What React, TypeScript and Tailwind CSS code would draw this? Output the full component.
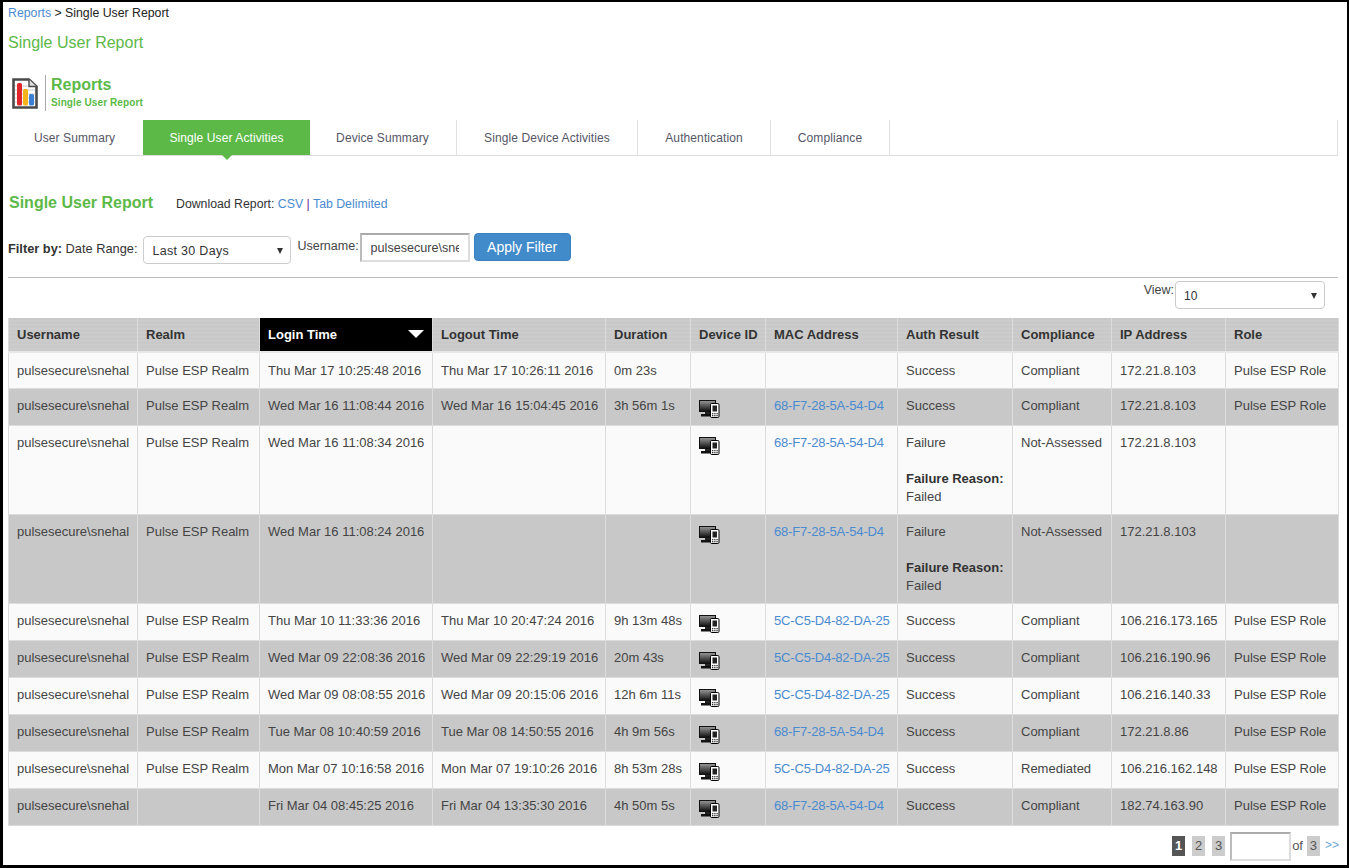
import React from "react";

function DeviceIcon() {
  return (
    <svg width="21" height="18" viewBox="0 0 21 18" className="block">
      <defs>
        <linearGradient id="scr" x1="0" y1="0" x2="0" y2="1">
          <stop offset="0" stopColor="#9a9a9a" />
          <stop offset="1" stopColor="#0c0c0c" />
        </linearGradient>
      </defs>
      <rect x="0.5" y="0.5" width="16" height="11" fill="url(#scr)" stroke="#111" />
      <rect x="6" y="12" width="5" height="2" fill="#222" />
      <rect x="2" y="14" width="13" height="2.5" fill="#111" />
      <rect x="11.5" y="3.5" width="8.5" height="14" rx="1.2" fill="#fff" stroke="#000" />
      <rect x="13.5" y="5.5" width="4.5" height="6" fill="#222" />
      <rect x="13" y="13" width="1.3" height="1.3" fill="#333" />
      <rect x="15.2" y="13" width="1.3" height="1.3" fill="#333" />
      <rect x="17.4" y="13" width="1.3" height="1.3" fill="#333" />
      <rect x="13" y="15" width="1.3" height="1.3" fill="#333" />
      <rect x="15.2" y="15" width="1.3" height="1.3" fill="#333" />
      <rect x="17.4" y="15" width="1.3" height="1.3" fill="#333" />
    </svg>
  );
}

function ReportIcon() {
  return (
    <svg width="26" height="31" viewBox="0 0 26 31" className="block">
      <path d="M1.5 1.5H17L24.5 8.5V29.5H1.5Z" fill="#fff" stroke="#4a4a4a" strokeWidth="2.6" />
      <path d="M17 1.5V8.5H24.5" fill="#ddd" stroke="#4a4a4a" strokeWidth="1.4" />
      <path d="M3 8H16M3 12H23M3 16H23M3 20H23M3 24H23" stroke="#ccc" strokeWidth="1" />
      <rect x="5" y="5" width="5" height="22.5" rx="1.5" fill="#e0262b" />
      <rect x="11" y="11" width="5" height="16.5" rx="1.5" fill="#f5b21a" />
      <rect x="17" y="16" width="5" height="11.5" rx="1.5" fill="#3a7fd5" />
    </svg>
  );
}

type Row = {
  r: string; li: string; lo: string; d: string; dev: boolean; mac: string;
  a: string; c: string; ip: string; role: string; h: string; fail?: boolean;
};

const role = "Pulse ESP Role";
const realm = "Pulse ESP Realm";
const rows: Row[] = [
  { r: realm, li: "Thu Mar 17 10:25:48 2016", lo: "Thu Mar 17 10:26:11 2016", d: "0m 23s", dev: false, mac: "", a: "Success", c: "Compliant", ip: "172.21.8.103", role, h: "h-[36px] [&>td]:pt-[9px]" },
  { r: realm, li: "Wed Mar 16 11:08:44 2016", lo: "Wed Mar 16 15:04:45 2016", d: "3h 56m 1s", dev: true, mac: "68-F7-28-5A-54-D4", a: "Success", c: "Compliant", ip: "172.21.8.103", role, h: "h-[37px]" },
  { r: realm, li: "Wed Mar 16 11:08:34 2016", lo: "", d: "", dev: true, mac: "68-F7-28-5A-54-D4", a: "Failure", c: "Not-Assessed", ip: "172.21.8.103", role: "", h: "h-[89px]", fail: true },
  { r: realm, li: "Wed Mar 16 11:08:24 2016", lo: "", d: "", dev: true, mac: "68-F7-28-5A-54-D4", a: "Failure", c: "Not-Assessed", ip: "172.21.8.103", role: "", h: "h-[89px]", fail: true },
  { r: realm, li: "Thu Mar 10 11:33:36 2016", lo: "Thu Mar 10 20:47:24 2016", d: "9h 13m 48s", dev: true, mac: "5C-C5-D4-82-DA-25", a: "Success", c: "Compliant", ip: "106.216.173.165", role, h: "h-[37px]" },
  { r: realm, li: "Wed Mar 09 22:08:36 2016", lo: "Wed Mar 09 22:29:19 2016", d: "20m 43s", dev: true, mac: "5C-C5-D4-82-DA-25", a: "Success", c: "Compliant", ip: "106.216.190.96", role, h: "h-[37px]" },
  { r: realm, li: "Wed Mar 09 08:08:55 2016", lo: "Wed Mar 09 20:15:06 2016", d: "12h 6m 11s", dev: true, mac: "5C-C5-D4-82-DA-25", a: "Success", c: "Compliant", ip: "106.216.140.33", role, h: "h-[37px]" },
  { r: realm, li: "Tue Mar 08 10:40:59 2016", lo: "Tue Mar 08 14:50:55 2016", d: "4h 9m 56s", dev: true, mac: "68-F7-28-5A-54-D4", a: "Success", c: "Compliant", ip: "172.21.8.86", role, h: "h-[37px]" },
  { r: realm, li: "Mon Mar 07 10:16:58 2016", lo: "Mon Mar 07 19:10:26 2016", d: "8h 53m 28s", dev: true, mac: "5C-C5-D4-82-DA-25", a: "Success", c: "Remediated", ip: "106.216.162.148", role, h: "h-[37px]" },
  { r: "", li: "Fri Mar 04 08:45:25 2016", lo: "Fri Mar 04 13:35:30 2016", d: "4h 50m 5s", dev: true, mac: "68-F7-28-5A-54-D4", a: "Success", c: "Compliant", ip: "182.74.163.90", role, h: "h-[37px]" },
];

const headers = ["Username", "Realm", "Login Time", "Logout Time", "Duration", "Device ID", "MAC Address", "Auth Result", "Compliance", "IP Address", "Role"];
const widths = ["w-[128.5px]", "w-[122px]", "w-[173px]", "w-[173px]", "w-[85px]", "w-[75px]", "w-[132px]", "w-[115px]", "w-[99px]", "w-[114px]", "w-[113.5px]"];
const td = "border-x border-[#dcdcdc] pl-[8.5px] pr-[6px] first:pl-2 align-top pt-[8px] overflow-hidden whitespace-nowrap";

function Tab({ label, active, w }: { label: string; active?: boolean; w: string }) {
  return (
    <div className={`relative flex h-full items-center justify-center text-[12px] tracking-[0.1px] ${w} ${active ? "bg-[#5cb947] text-white" : "border-r border-[#e2e2e2] text-[#555566]"}`}>
      {label}
      {active && <span className="absolute left-1/2 top-full -ml-[5px] border-x-[5px] border-t-[5px] border-x-transparent border-t-[#5cb947]" />}
    </div>
  );
}

export default function App() {
  return (
    <div className="h-[868px] w-[1349px] overflow-hidden border-b-[3px] border-l-[3px] border-r-[2px] border-t-[2px] border-black bg-white pl-[5px] pr-[9px] font-['Liberation_Sans',Arial,sans-serif] text-[13px] text-[#444]">
      <div className="h-[20px] pt-[3px] text-[12.3px] leading-[16px] text-[#222]">
        <span className="text-[#4a8bd0]">Reports</span> &gt; Single User Report
      </div>
      <div className="mt-[9px] h-[26px] text-[16px] leading-[24px] text-[#5cb947]">Single User Report</div>

      <div className="mt-[17px] flex h-[38px] items-center">
        <div className="ml-[4px] mt-[1px]"><ReportIcon /></div>
        <div className="ml-[7px] h-[36px] border-l border-[#aaa] pl-[5px]">
          <div className="text-[16px] font-bold leading-[20px] text-[#5cb947]">Reports</div>
          <div className="mt-[1px] text-[10px] font-bold leading-[14px] tracking-[0.1px] text-[#5cb947]">Single User Report</div>
        </div>
      </div>

      <div className="mt-[8px] flex h-[36px] border-b border-[#ddd]">
        <Tab label="User Summary" w="w-[135px] border-r-0 -translate-x-px" />
        <Tab label="Single User Activities" active w="w-[167px]" />
        <Tab label="Device Summary" w="w-[147px] pr-px" />
        <Tab label="Single Device Activities" w="w-[181px]" />
        <Tab label="Authentication" w="w-[133px]" />
        <Tab label="Compliance" w="w-[119px]" />
        <div className="flex-1 border-r border-[#e2e2e2]" />
      </div>

      <div className="mt-[37px] flex h-[20px] items-center">
        <div className="ml-[1px] w-[167px] text-[16px] font-bold text-[#5cb947]">Single User Report</div>
        <div className="mt-[2px] text-[12.3px] text-[#333]">
          Download Report: <span className="text-[#4a8bd0]">CSV</span> <span className="text-[#6a2c91]">|</span> <span className="text-[#4a8bd0]">Tab Delimited</span>
        </div>
      </div>

      <div className="mt-[20px] flex h-[30px] items-start">
        <div className="mt-[8px] text-[12.8px] leading-[16px] text-[#333]"><b>Filter by:</b> Date Range:</div>
        <div className="relative ml-[6px] mt-[3px] flex h-[28px] w-[148px] items-center rounded-[4px] border border-[#ccc] pl-[8px] pt-[2px] text-[12.5px] tracking-[0.3px] text-[#333]">
          Last 30 Days
          <span className="absolute right-[7px] top-[11px] border-x-[3px] border-t-[6px] border-x-transparent border-t-[#333]" />
        </div>
        <div className="ml-[6px] mt-[5px] text-[12.5px] leading-[16px] text-[#444]">Username:</div>
        <input
          readOnly
          value="pulsesecure\snehal"
          className="ml-[1px] h-[29px] w-[110px] border-2 border-[#ddd] border-l-[#bbb] border-t-[#aaa] pl-[9px] pr-[9px] text-[12.6px] text-[#444] outline-none"
        />
        <div className="ml-[4px] flex h-[28px] w-[97px] items-center justify-center rounded-[4px] border border-[#3b7fbf] bg-[#428bca] text-[14px] text-white">Apply Filter</div>
      </div>

      <div className="mt-[14px] h-[35px] border-t border-[#bbb]">
        <div className="flex justify-end pr-[13px] pt-[3px]">
          <span className="mt-[1px] text-[12.5px] leading-[16px] text-[#444]">View:</span>
          <div className="relative ml-[1px] flex h-[28px] w-[150px] items-center rounded-[4px] border border-[#ccc] pl-[8px] pt-[2px] text-[12px] text-[#333]">
            10
            <span className="absolute right-[7px] top-[11px] border-x-[3px] border-t-[6px] border-x-transparent border-t-[#333]" />
          </div>
        </div>
      </div>

      <table className="mt-[6px] w-[1330px] table-fixed border-collapse text-[13px] leading-[18px]">
        <colgroup>
          {widths.map((w, i) => <col key={i} className={w} />)}
        </colgroup>
        <thead>
          <tr className="h-[34px] border-b-[2px] border-[#e8e8e8]">
            {headers.map((h, i) => (
              <th key={h} className={`relative whitespace-nowrap border-x border-[#dcdcdc] pl-[8.5px] pr-[6px] text-left text-[13px] font-bold first:pl-2 ${i === 2 ? "bg-black text-white" : "bg-[#c9c9c9] bg-[repeating-linear-gradient(0deg,#c6c6c6_0px,#cdcdcd_2px,#c8c8c8_4px)] text-[#333]"}`}>
                {h}
                {i === 2 && <span className="absolute right-[8px] top-[12px] border-x-[8px] border-t-[8px] border-x-transparent border-t-white" />}
              </th>
            ))}
          </tr>
        </thead>
        <tbody>
          {rows.map((x, i) => (
            <tr key={i} className={`${x.h} border-b border-[#dcdcdc] ${i % 2 ? "bg-[#c8c8c8]" : "bg-[#fafafa]"}`}>
              <td className={td}>pulsesecure\snehal</td>
              <td className={td}>{x.r}</td>
              <td className={td}>{x.li}</td>
              <td className={td}>{x.lo}</td>
              <td className={td}>{x.d}</td>
              <td className={td}>{x.dev && <div className="mt-[3px]"><DeviceIcon /></div>}</td>
              <td className={`${td} tracking-[-0.17px] text-[#4a8bd0]`}>{x.mac}</td>
              <td className={td}>
                {x.a}
                {x.fail && (
                  <div className="mt-[18px]"><div className="font-bold text-[#333]">Failure Reason:</div>Failed</div>
                )}
              </td>
              <td className={td}>{x.c}</td>
              <td className={td}>{x.ip}</td>
              <td className={td}>{x.role}</td>
            </tr>
          ))}
        </tbody>
      </table>

      <div className="mt-[6px] -mr-[1px] flex items-start justify-end text-[13px] text-[#555]">
        <span className="mt-[4px] flex h-[20px] w-[13px] items-center justify-center bg-[#555] font-bold text-white">1</span>
        <span className="ml-[7px] mt-[4px] flex h-[20px] w-[13px] items-center justify-center bg-[#ccc]">2</span>
        <span className="ml-[7px] mt-[4px] flex h-[20px] w-[13px] items-center justify-center bg-[#ccc]">3</span>
        <span className="ml-[5px] h-[29px] w-[61px] border-2 border-[#ddd] border-l-[#bbb] border-t-[#aaa]" />
        <span className="ml-[1px] mt-[5px] leading-[18px]">of</span>
        <span className="ml-[4px] mt-[4px] flex h-[20px] w-[13px] items-center justify-center bg-[#ccc]">3</span>
        <span className="ml-[5px] mt-[4px] text-[12px] leading-[18px] text-[#6ea3dc]">&gt;&gt;</span>
      </div>
    </div>
  );
}
